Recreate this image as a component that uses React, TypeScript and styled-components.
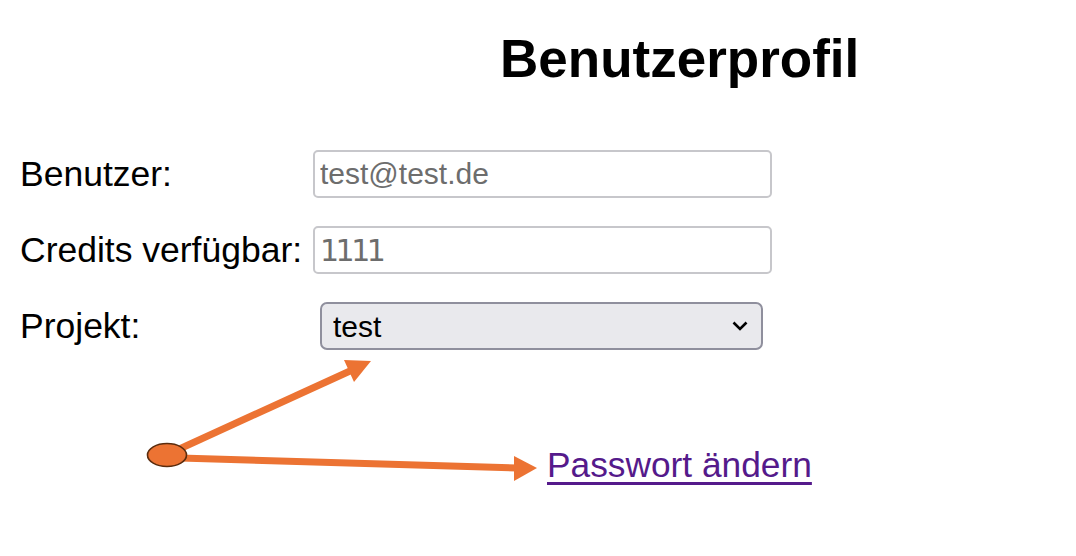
import React from "react";
import styled, { createGlobalStyle } from "styled-components";

const GlobalStyle = createGlobalStyle`
  html, body {
    margin: 0;
    padding: 0;
    background: #fff;
  }
  body {
    font-family: "Liberation Sans", Arial, sans-serif;
    color: #000;
  }
`;

const Page = styled.div`
  position: relative;
  width: 1076px;
  height: 556px;
  overflow: hidden;
`;

const Title = styled.h2`
  margin: 28px 0 0 500px;
  font-size: 53px;
  line-height: 62px;
  font-weight: bold;
`;

const Form = styled.div`
  display: grid;
  grid-template-columns: 293px 459px;
  grid-auto-rows: 48px;
  row-gap: 28px;
  margin: 60px 0 0 20px;
`;

const Label = styled.label`
  align-self: center;
  font-size: 35.5px;
  line-height: 42px;
  white-space: nowrap;
`;

const Field = styled.input<{ $mono?: boolean }>`
  box-sizing: border-box;
  width: 100%;
  height: 48px;
  margin: 0;
  padding: 0 0 0 5px;
  border: 2px solid #c7c7cb;
  border-radius: 5px;
  background: #fff;
  color: #6d6d6d;
  font-family: ${(p) => (p.$mono ? `"DejaVu Sans", sans-serif` : `"Liberation Sans", Arial, sans-serif`)};
  font-size: ${(p) => (p.$mono ? "30px" : "30px")};
  letter-spacing: ${(p) => (p.$mono ? "-3.5px" : "normal")};
  outline: none;
`;

const SelectWrap = styled.div`
  position: relative;
  margin-left: 7px;
  width: 443px;
  height: 48px;
`;

const Select = styled.select`
  appearance: none;
  box-sizing: border-box;
  width: 100%;
  height: 100%;
  margin: 0;
  padding: 0 0 0 11px;
  border: 2px solid #8f8f9d;
  border-radius: 7px;
  background: #e9e9ed;
  color: #000;
  font-family: "Liberation Sans", Arial, sans-serif;
  font-size: 30px;
  outline: none;
`;

const Chevron = styled.svg`
  position: absolute;
  right: 15px;
  top: 19px;
  pointer-events: none;
`;

const LinkRow = styled.div`
  margin: 94px 0 0 547px;
  font-size: 35.3px;
  line-height: 42px;
`;

const Link = styled.a`
  color: #551a8b;
  text-decoration: underline;
  text-decoration-thickness: 3px;
  text-underline-offset: 5px;
`;

const Annotation = styled.svg`
  position: absolute;
  left: 0;
  top: 0;
  pointer-events: none;
`;

const ORANGE = "#ec7333";

export default function App() {
  return (
    <Page>
      <GlobalStyle />
      <Title>Benutzerprofil</Title>
      <Form>
        <Label>Benutzer:</Label>
        <Field readOnly value="test@test.de" />
        <Label>Credits verfügbar:</Label>
        <Field readOnly $mono value="1111" />
        <Label>Projekt:</Label>
        <SelectWrap>
          <Select defaultValue="test">
            <option value="test">test</option>
          </Select>
          <Chevron width="16" height="10" viewBox="0 0 16 10">
            <path d="M1.5 1.5 L8 8 L14.5 1.5" fill="none" stroke="#000" strokeWidth="2.6" />
          </Chevron>
        </SelectWrap>
      </Form>
      <LinkRow>
        <Link href="#">Passwort ändern</Link>
      </LinkRow>
      <Annotation width="1076" height="556" viewBox="0 0 1076 556">
        <line x1="175" y1="451" x2="350" y2="371" stroke={ORANGE} strokeWidth="7" />
        <polygon points="371,361 344,360 354,382" fill={ORANGE} />
        <line x1="180" y1="458" x2="517" y2="468" stroke={ORANGE} strokeWidth="7" />
        <polygon points="537,468 514,456 514,481" fill={ORANGE} />
        <ellipse cx="167" cy="455" rx="19.5" ry="11.5" fill={ORANGE} stroke="#5a2c0e" strokeWidth="1.6" />
      </Annotation>
    </Page>
  );
}
